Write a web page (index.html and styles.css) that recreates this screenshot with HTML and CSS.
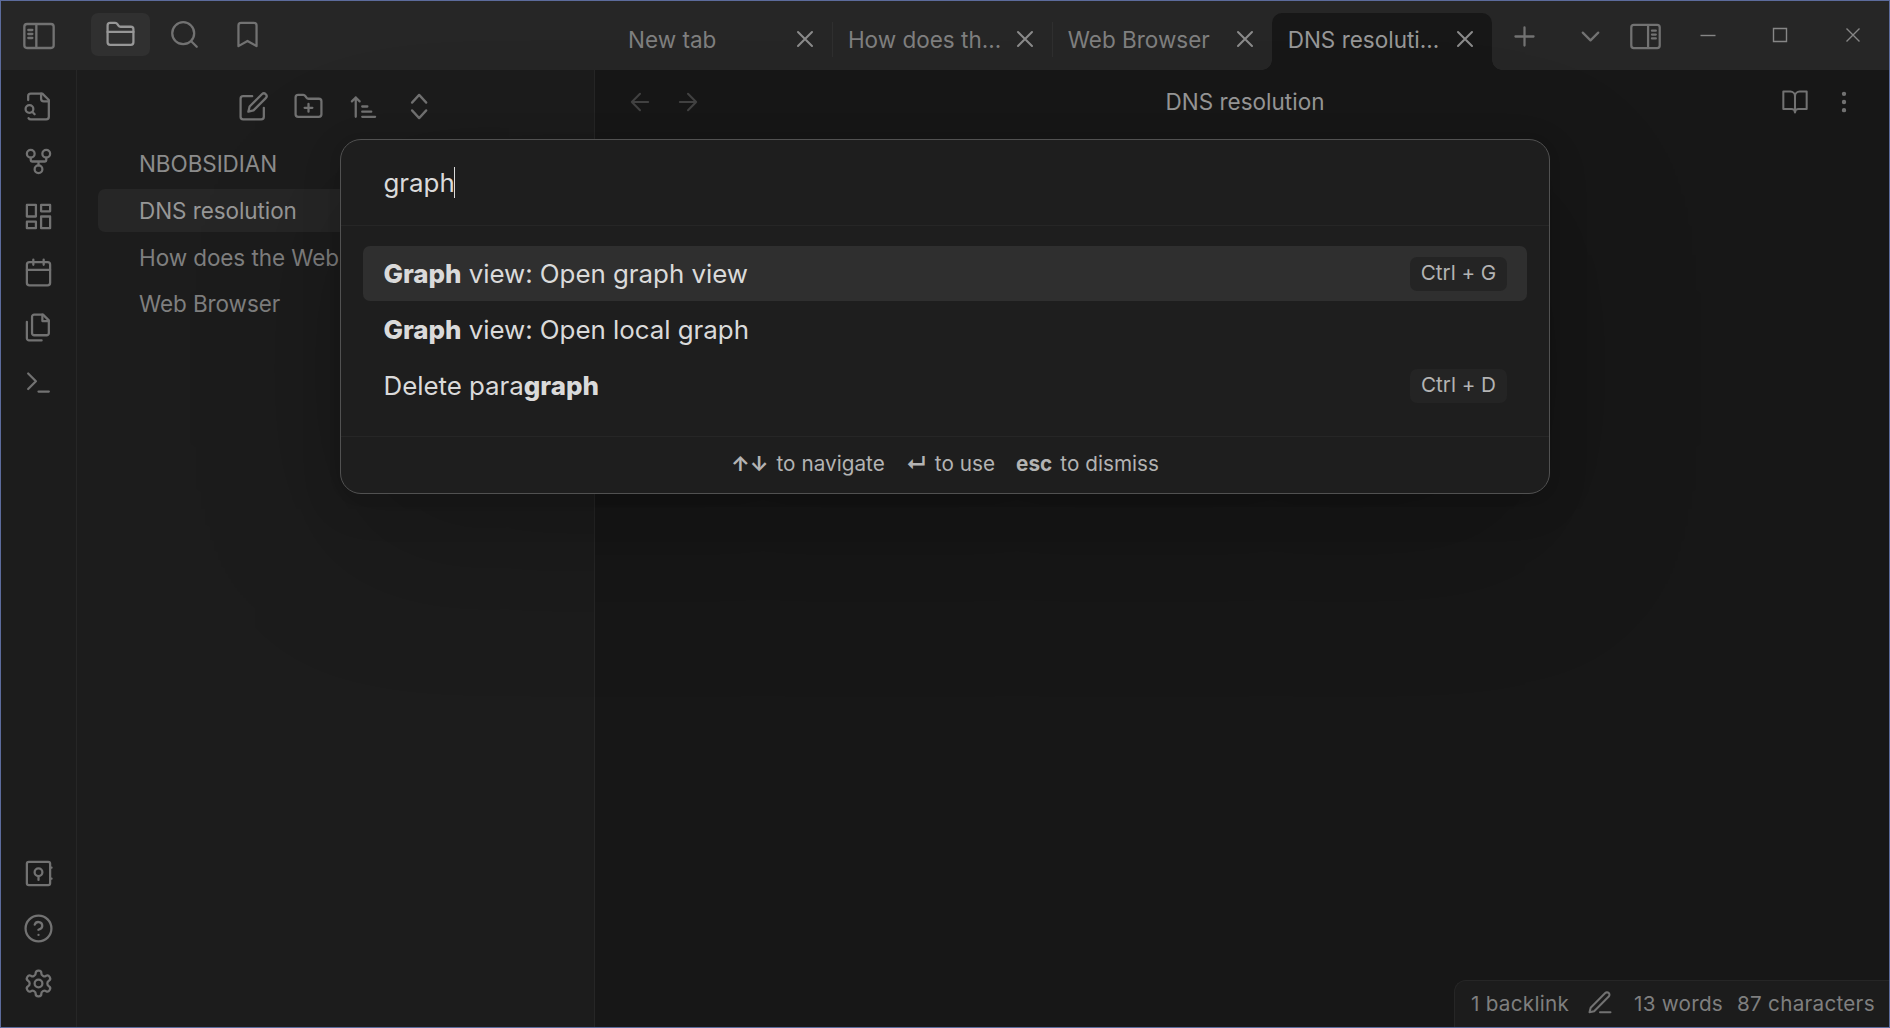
FILE: index.html
```html
<!DOCTYPE html>
<html lang="en">
<head>
<meta charset="utf-8">
<title>DNS resolution</title>
<link rel="stylesheet" href="styles.css">
</head>
<body>
<div class="app">
  <header class="titlebar">
    <div class="toggle"><svg class="icon" viewBox="0 0 24 24"><rect x="1" y="3" width="22" height="18" rx="2"/><path d="M10 4v16M4 7.500h3M4 10.500h3M4 13.500h3"/></svg></div>
    <nav class="side-tabs">
      <div class="side-tab active"><svg class="icon" viewBox="0 0 24 24"><path d="M20 20a2 2 0 0 0 2-2V8a2 2 0 0 0-2-2h-7.900a2 2 0 0 1-1.690-.9L9.600 3.900A2 2 0 0 0 7.930 3H4a2 2 0 0 0-2 2v13a2 2 0 0 0 2 2Z"/><path d="M2 10h20"/></svg></div>
      <div class="side-tab"><svg class="icon" viewBox="0 0 24 24"><circle cx="11" cy="11" r="8.500"/><path d="m21.500 21.500-4.500-4.500"/></svg></div>
      <div class="side-tab"><svg class="icon" viewBox="0 0 24 24"><path d="m19 21-7-4-7 4V5a2 2 0 0 1 2-2h10a2 2 0 0 1 2 2v16z"/></svg></div>
    </nav>
    <div class="tabs">
      <div class="tab"><span class="t">New tab</span><svg class="icon small" viewBox="0 0 24 24"><path d="M18 6 6 18M6 6l12 12"/></svg></div>
      <div class="tab sep"><span class="t">How does th...</span><svg class="icon small" viewBox="0 0 24 24"><path d="M18 6 6 18M6 6l12 12"/></svg></div>
      <div class="tab sep"><span class="t">Web Browser</span><svg class="icon small" viewBox="0 0 24 24"><path d="M18 6 6 18M6 6l12 12"/></svg></div>
      <div class="tab current"><span class="t">DNS resoluti...</span><svg class="icon small" viewBox="0 0 24 24"><path d="M18 6 6 18M6 6l12 12"/></svg></div>
    </div>
    <div class="tab-actions">
      <div class="cell plus"><svg class="icon" viewBox="0 0 24 24"><path d="M5 12h14M12 5v14"/></svg></div>
      <div class="cell down"><svg class="icon" viewBox="0 0 24 24"><path d="m6 9 6 6 6-6"/></svg></div>
      <div class="cell right-toggle"><svg class="icon" viewBox="0 0 24 24"><rect x="1" y="3" width="22" height="18" rx="2"/><path d="M14 4v16M17 7.500h3M17 10.500h3M17 13.500h3"/></svg></div>
    </div>
    <div class="window-controls">
      <div class="control"><svg viewBox="0 0 16 16"><path d="M.5 8.500h15"/></svg></div>
      <div class="control"><svg viewBox="0 0 16 16"><path d="M1.500 1.500h13v13h-13z"/></svg></div>
      <div class="control"><svg viewBox="0 0 16 16"><path d="m1.500 1.500 13 13M14.500 1.500l-13 13"/></svg></div>
    </div>
  </header>

  <div class="workspace">
    <aside class="ribbon">
      <div class="ribbon-group">
        <svg class="icon" viewBox="0 0 24 24"><path d="M14 2v4a2 2 0 0 0 2 2h4"/><path d="M4.268 21a2 2 0 0 0 1.727 1H18a2 2 0 0 0 2-2V7l-5-5H6a2 2 0 0 0-2 2v3"/><path d="m9 18-1.500-1.500"/><circle cx="5" cy="14" r="3"/></svg>
        <svg class="icon" viewBox="0 0 24 24"><circle cx="12" cy="18" r="3"/><circle cx="6" cy="6" r="3"/><circle cx="18" cy="6" r="3"/><path d="M18 9v2c0 .6-.4 1-1 1H7c-.6 0-1-.4-1-1V9M12 12v3"/></svg>
        <svg class="icon" viewBox="0 0 24 24"><rect x="3" y="3" width="7" height="9"/><rect x="14" y="3" width="7" height="5"/><rect x="14" y="12" width="7" height="9"/><rect x="3" y="16" width="7" height="5"/></svg>
        <svg class="icon" viewBox="0 0 24 24"><rect x="3" y="4" width="18" height="18" rx="2"/><path d="M16 2v4M8 2v4M3 10h18"/></svg>
        <svg class="icon" viewBox="0 0 24 24"><path d="M15.500 2H8.600c-.4 0-.8.2-1.100.5-.3.3-.5.700-.5 1.100v12.800c0 .4.2.8.5 1.100.3.3.7.5 1.100.5h9.800c.4 0 .8-.2 1.100-.5.3-.3.5-.7.5-1.100V6.500L15.500 2z"/><path d="M3 7.600v12.800c0 .4.2.8.5 1.100.3.3.7.5 1.100.5h9.800M15 2v5h5"/></svg>
        <svg class="icon" viewBox="0 0 24 24"><path d="m4 17 6-6-6-6M12 19h8"/></svg>
      </div>
      <div class="ribbon-group">
        <svg class="icon" viewBox="0 0 24 24"><rect x="3" y="3" width="18" height="18" rx="1.500"/><circle cx="12" cy="11" r="3"/><path d="M12 14v3M22 7.500h.1M22 16h.1"/></svg>
        <svg class="icon" viewBox="0 0 24 24"><circle cx="12" cy="12" r="10"/><path d="M9.090 9a3 3 0 0 1 5.830 1c0 2-3 3-3 3M12 17h.01"/></svg>
        <svg class="icon" viewBox="0 0 24 24"><path d="M12.220 2h-.44a2 2 0 0 0-2 2v.18a2 2 0 0 1-1 1.730l-.43.25a2 2 0 0 1-2 0l-.15-.08a2 2 0 0 0-2.730.73l-.22.38a2 2 0 0 0 .73 2.730l.15.1a2 2 0 0 1 1 1.720v.51a2 2 0 0 1-1 1.740l-.15.09a2 2 0 0 0-.73 2.730l.22.38a2 2 0 0 0 2.730.73l.15-.08a2 2 0 0 1 2 0l.43.25a2 2 0 0 1 1 1.730V20a2 2 0 0 0 2 2h.44a2 2 0 0 0 2-2v-.18a2 2 0 0 1 1-1.730l.43-.25a2 2 0 0 1 2 0l.15.08a2 2 0 0 0 2.730-.73l.22-.39a2 2 0 0 0-.73-2.730l-.15-.08a2 2 0 0 1-1-1.740v-.5a2 2 0 0 1 1-1.740l.15-.09a2 2 0 0 0 .73-2.730l-.22-.38a2 2 0 0 0-2.730-.73l-.15.08a2 2 0 0 1-2 0l-.43-.25a2 2 0 0 1-1-1.730V4a2 2 0 0 0-2-2z"/><circle cx="12" cy="12" r="3"/></svg>
      </div>
    </aside>

    <section class="explorer">
      <div class="explorer-actions">
        <svg class="icon" viewBox="0 0 24 24"><path d="M11 4H4a2 2 0 0 0-2 2v14a2 2 0 0 0 2 2h14a2 2 0 0 0 2-2v-7"/><path d="M18.500 2.500a2.121 2.121 0 0 1 3 3L12 15l-4 1 1-4 9.500-9.500z"/></svg>
        <svg class="icon" viewBox="0 0 24 24"><path d="M12 10v6M9 13h6M20 20a2 2 0 0 0 2-2V8a2 2 0 0 0-2-2h-7.900a2 2 0 0 1-1.690-.9L9.600 3.900A2 2 0 0 0 7.930 3H4a2 2 0 0 0-2 2v13a2 2 0 0 0 2 2Z"/></svg>
        <svg class="icon" viewBox="0 0 24 24"><path d="m3 8 3-3 3 3M6 5v15M11 12h4M11 16h7M11 20h10"/></svg>
        <svg class="icon" viewBox="0 0 24 24"><path d="m7 9 5.500-6 5.500 6M7 15l5.500 6 5.500-6"/></svg>
      </div>
      <div class="vault"><span class="t">NBOBSIDIAN</span></div>
      <div class="file selected"><span class="t">DNS resolution</span></div>
      <div class="file"><span class="t">How does the Web</span></div>
      <div class="file"><span class="t">Web Browser</span></div>
    </section>

    <main class="editor">
      <div class="view-header">
        <div class="history">
          <svg class="icon small" viewBox="0 0 24 24"><path d="m12 19-7-7 7-7M19 12H5"/></svg>
          <svg class="icon small" viewBox="0 0 24 24"><path d="M5 12h14M12 5l7 7-7 7"/></svg>
        </div>
        <span class="t">DNS resolution</span>
        <div class="view-actions">
          <svg class="icon small" viewBox="0 0 24 24"><path d="M2 3h6a4 4 0 0 1 4 4v14a3 3 0 0 0-3-3H2zM22 3h-6a4 4 0 0 0-4 4v14a3 3 0 0 1 3-3h7z"/></svg>
          <svg class="icon small" viewBox="0 0 24 24"><circle cx="12" cy="12" r="1"/><circle cx="12" cy="5" r="1"/><circle cx="12" cy="19" r="1"/></svg>
        </div>
      </div>
      <footer class="status">
        <span class="t">1 backlink</span>
        <svg class="icon small" viewBox="0 0 24 24"><path d="M12 20h9"/><path d="M16.500 3.500a2.121 2.121 0 0 1 3 3L7 19l-4 1 1-4L16.500 3.500z"/></svg>
        <span class="t">13 words</span>
        <span class="t">87 characters</span>
      </footer>
    </main>
  </div>

  <div class="palette">
    <div class="prompt"><span class="t">graph</span><i class="caret"></i></div>
    <div class="results">
      <div class="result chosen"><span class="t"><b>Graph</b> view: Open graph view</span><kbd><span class="t">Ctrl + G</span></kbd></div>
      <div class="result"><span class="t"><b>Graph</b> view: Open local graph</span></div>
      <div class="result"><span class="t">Delete para<b>graph</b></span><kbd><span class="t">Ctrl + D</span></kbd></div>
    </div>
    <div class="hints">
      <div class="hint"><b class="t">↑↓</b><span class="t">to navigate</span></div>
      <div class="hint"><b class="t">↵</b><span class="t">to use</span></div>
      <div class="hint"><b class="t">esc</b><span class="t">to dismiss</span></div>
    </div>
  </div>
</div>
</body>
</html>
```
FILE: styles.css
```css
* { box-sizing: border-box; }

body {
  margin: 0;
  background: #171717;
  color: #7f7f7f;
  font-family: Inter, "Liberation Sans", sans-serif;
  font-size: 22.5px;
  overflow: hidden;
}

.app {
  position: relative;
  display: flex;
  flex-direction: column;
  width: 1890px;
  height: 1028px;
  border: 1px solid #5c6b9c;
  overflow: hidden;
}

.t { white-space: pre; }

.icon {
  flex: none;
  width: 31px;
  height: 31px;
  fill: none;
  stroke: #727272;
  stroke-width: 1.75;
  stroke-linecap: round;
  stroke-linejoin: round;
}

.icon.small { width: 28px; height: 28px; }

.titlebar {
  display: flex;
  flex: none;
  height: 69px;
  background: #262626;
}

.toggle {
  display: flex;
  align-items: center;
  justify-content: center;
  width: 76px;
  height: 69px;
  padding-right: 1px;
}

.toggle .icon { width: 32px; height: 32px; }

.side-tabs {
  display: flex;
  gap: 4.500px;
  width: 535px;
  padding: 12px 0 0 14px;
}

.side-tab {
  display: flex;
  align-items: center;
  justify-content: center;
  width: 59px;
  height: 43px;
  border-radius: 7px;
}

.side-tab.active { background: #303030; }
.side-tab.active .icon { stroke: #979797; }

.tabs { display: flex; padding-top: 12px; }

.tab {
  position: relative;
  display: flex;
  align-items: center;
  justify-content: space-between;
  width: 219.900px;
  padding: 0 13px 5px 16px;
}

.tab .icon { stroke: #8a8a8a; }

.tab.sep::before {
  content: "";
  position: absolute;
  left: 0;
  top: 9px;
  width: 1px;
  height: 35px;
  background: #2f2f2f;
}

.tab.current {
  background: #171717;
  color: #979797;
  border-radius: 10px 10px 0 0;
}

.tab.current::before,
.tab.current::after {
  content: "";
  position: absolute;
  bottom: 0;
  width: 10px;
  height: 10px;
}

.tab.current::before {
  left: -10px;
  background: radial-gradient(circle at 0 0, transparent 9.500px, #171717 10px);
}

.tab.current::after {
  right: -10px;
  background: radial-gradient(circle at 100% 0, transparent 9.500px, #171717 10px);
}

.tab-actions { display: flex; flex: 1; }

.cell { display: flex; align-items: center; justify-content: center; height: 70px; }
.plus { width: 66px; }
.down { width: 65px; }
.right-toggle { width: 46px; }

.window-controls { display: flex; width: 217px; }

.control {
  display: flex;
  align-items: center;
  justify-content: center;
  width: 72.300px;
  height: 68px;
}

.control svg {
  width: 16px;
  height: 16px;
  fill: none;
  stroke: #868686;
  stroke-width: 1.400;
}

.workspace { display: flex; flex: 1; min-height: 0; }

.ribbon {
  display: flex;
  flex-direction: column;
  justify-content: space-between;
  width: 76px;
  padding: 21px 0 28px;
  background: #1c1c1c;
  border-right: 1px solid #262626;
}

.ribbon-group {
  display: flex;
  flex-direction: column;
  align-items: center;
  gap: 24.200px;
}

.explorer {
  width: 518px;
  padding: 21px 20px 0 21px;
  background: #1c1c1c;
  border-right: 1px solid #262626;
}

.explorer-actions {
  display: flex;
  justify-content: center;
  gap: 24.300px;
  margin-bottom: 20px;
}

.vault,
.file {
  display: flex;
  align-items: center;
  height: 43px;
  margin-bottom: 3.800px;
  padding-left: 41px;
  border-radius: 7px;
  letter-spacing: -.08px;
}

.vault { color: #8c8c8c; }
.file.selected { background: #262626; color: #979797; }

.editor {
  display: flex;
  flex: 1;
  flex-direction: column;
  justify-content: space-between;
  background: #171717;
}

.view-header {
  display: grid;
  grid-template-columns: 206px 1fr 200px;
  align-items: center;
  height: 63px;
  color: #979797;
  text-align: center;
}

.history { display: flex; gap: 20px; padding-left: 31px; }
.history .icon { stroke: #434343; }
.view-actions { display: flex; justify-content: flex-end; gap: 20.500px; padding-right: 31.500px; }

.status {
  display: flex;
  align-items: center;
  align-self: flex-end;
  width: 435px;
  height: 47px;
  padding: 0 0 2px 16px;
  background: #1c1c1c;
  border: 1px solid #262626;
  border-width: 1px 0 0 1px;
  border-radius: 12px 0 0 0;
  font-size: 20.700px;
  letter-spacing: .25px;
}

.status .icon { margin: 0 20px 0 17px; }
.status .t:last-child { margin-left: 14px; }

.palette {
  position: absolute;
  left: 339px;
  top: 138px;
  width: 1210px;
  height: 355px;
  background: #1e1e1e;
  border: 1px solid #515151;
  border-radius: 21px;
  color: #dadada;
  font-size: 25.900px;
  letter-spacing: -.03px;
  box-shadow:
    0 3px 13px rgba(0, 0, 0, .07),
    0 11px 43px rgba(0, 0, 0, .11),
    0 52px 156px rgba(0, 0, 0, .2);
}

.prompt {
  display: flex;
  align-items: center;
  height: 86px;
  padding-left: 42.500px;
  border-bottom: 1px solid #262626;
}

.caret { width: 1px; height: 31px; margin-left: -.5px; background: #dadada; }

.results { height: 210px; padding: 20px 22px 0; }

.result {
  display: flex;
  align-items: center;
  justify-content: space-between;
  height: 55px;
  margin-bottom: 1px;
  padding: 0 20px 0 20.500px;
  border-radius: 7px;
}

.result.chosen { background: #2f2f2f; }
.result b { font-weight: 800; }

kbd {
  display: flex;
  align-items: center;
  justify-content: center;
  width: 97px;
  height: 34px;
  padding-bottom: 2px;
  background: #242424;
  border-radius: 7px;
  color: #b3b3b3;
  font: 20.700px Inter, sans-serif;
}

.hints {
  display: flex;
  align-items: center;
  justify-content: center;
  gap: 21px;
  height: 57px;
  padding-bottom: 3px;
  border-top: 1px solid #262626;
  color: #b3b3b3;
  font-size: 20.700px;
  letter-spacing: .04px;
}

.hint { display: flex; gap: 8px; }
```
